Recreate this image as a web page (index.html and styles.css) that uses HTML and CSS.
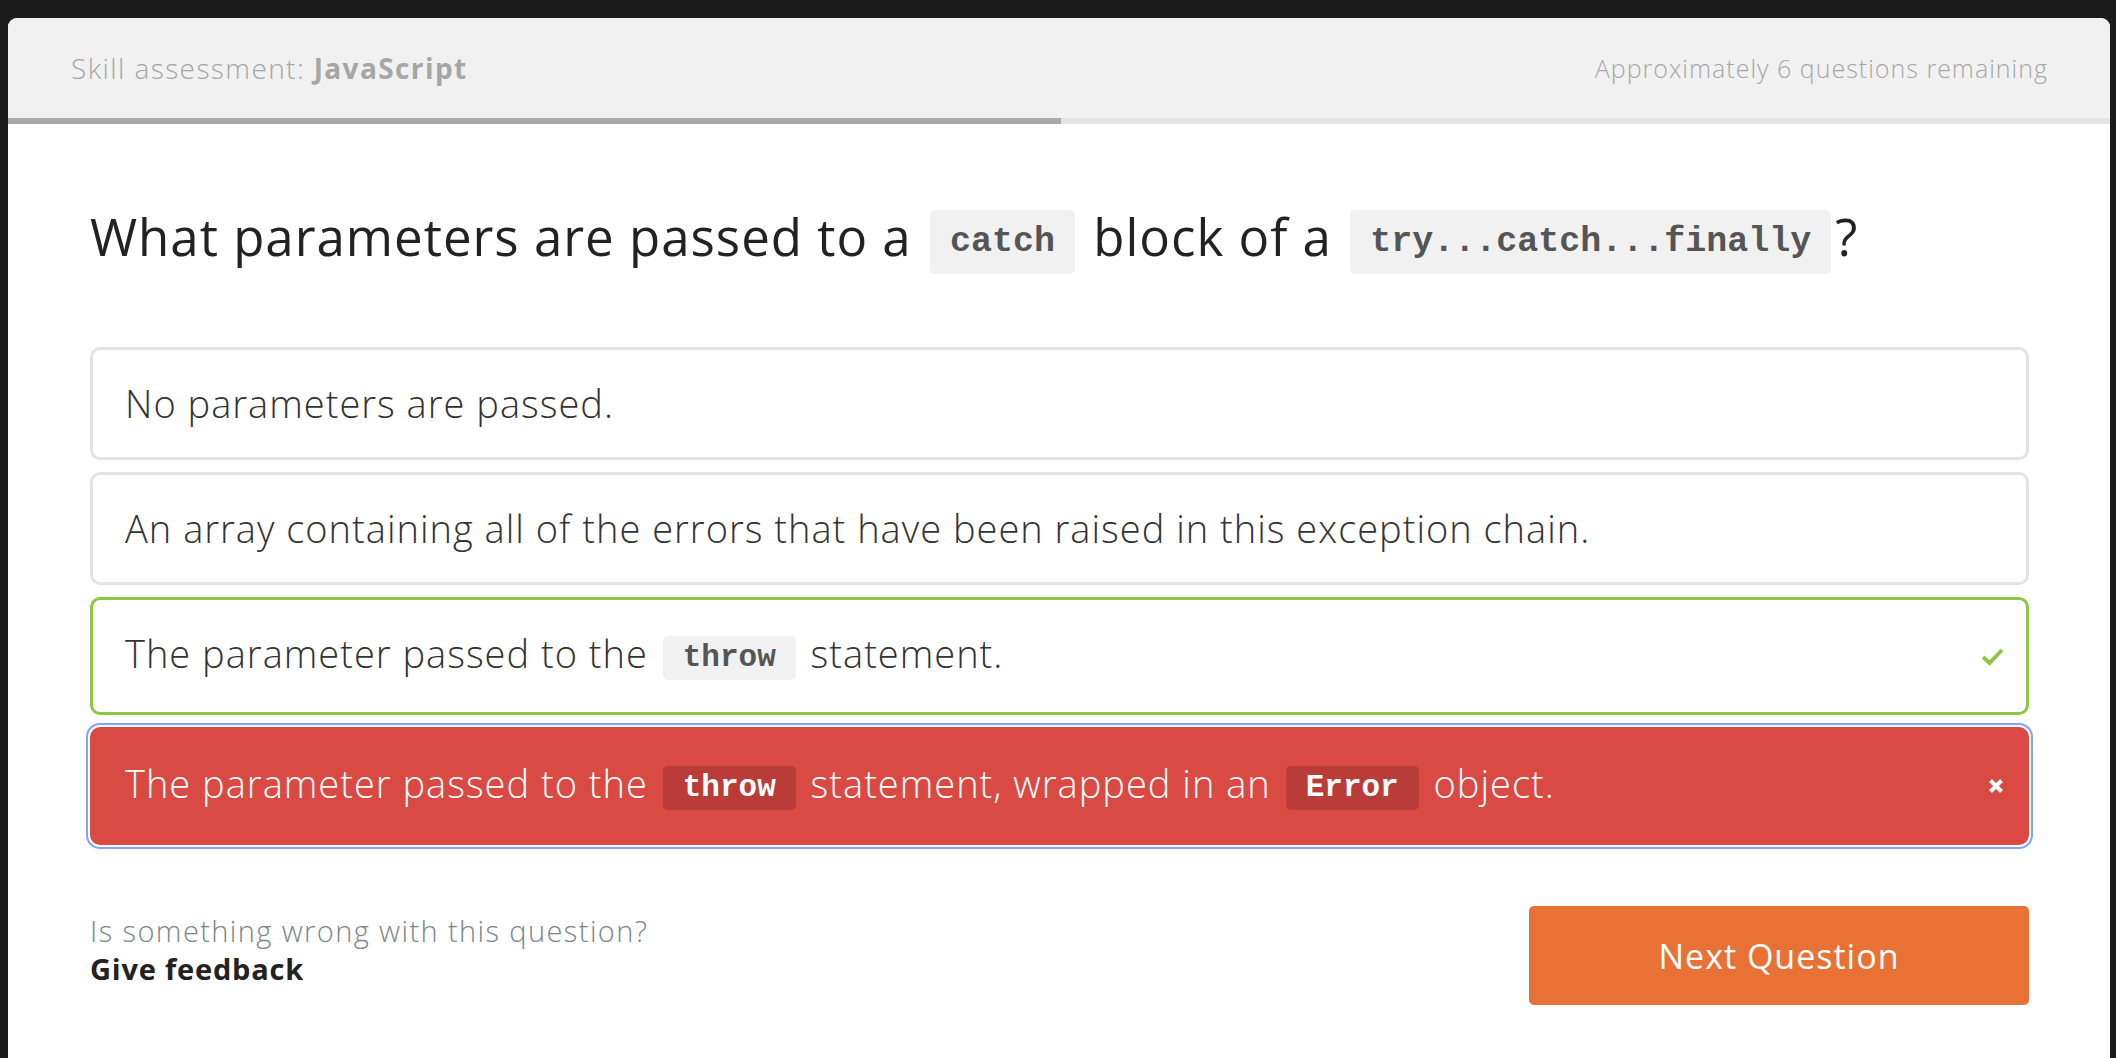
FILE: index.html
```html
<!DOCTYPE html>
<html lang="en">
<head>
<meta charset="utf-8">
<title>Skill assessment: JavaScript</title>
<link rel="stylesheet" href="styles.css">
</head>
<body>
<div class="card">
  <header class="top">
    <div class="title">Skill assessment: <strong>JavaScript</strong></div>
    <div class="remaining">Approximately 6 questions remaining</div>
  </header>
  <div class="progress"><div class="progress-fill" style="width:50.1%"></div></div>
  <main class="content">
    <h1 class="question">What parameters are passed to a <code class="qcode">catch</code> block of a <code class="qcode">try...catch...finally</code>?</h1>
    <ul class="options">
      <li class="option">No parameters are passed.</li>
      <li class="option">An array containing all of the errors that have been raised in this exception chain.</li>
      <li class="option correct"><span>The parameter passed to the <code class="ocode">throw</code> statement.</span>
        <svg class="icon" width="23" height="19" viewBox="0 0 23 19"><path d="M2 10 L8.5 16 L21 3" fill="none" stroke="#8dc63f" stroke-width="3.8"/></svg>
      </li>
      <li class="option wrong"><span>The parameter passed to the <code class="ocode">throw</code> statement, wrapped in an <code class="ocode">Error</code> object.</span>
        <svg class="icon" width="16" height="16" viewBox="0 0 16 16"><path d="M2.5 2.5 L13.5 13.5 M13.5 2.5 L2.5 13.5" fill="none" stroke="#ffffff" stroke-width="4"/></svg>
      </li>
    </ul>
    <div class="footer">
      <div class="feedback">
        <div class="fb-q">Is something wrong with this question?</div>
        <div class="fb-link">Give feedback</div>
      </div>
      <button class="next">Next Question</button>
    </div>
  </main>
</div>
</body>
</html>
```
FILE: styles.css
```css
html, body {
  margin: 0;
  padding: 0;
  background: #1b1b1b;
  height: 100%;
  overflow: hidden;
}
body {
  font-family: "Open Sans", "Lato", sans-serif;
  padding: 18px 6px 0 8px;
  box-sizing: border-box;
}
.card {
  background: #ffffff;
  border-radius: 9px 9px 0 0;
  height: 100%;
  overflow: hidden;
}
.top {
  height: 100px;
  background: #f1f1f1;
  display: flex;
  align-items: center;
  justify-content: space-between;
  padding: 0 62px 0 63px;
  color: #a6a6a6;
  font-weight: 300;
}
.title {
  font-size: 28px;
  letter-spacing: 1.4px;
}
.remaining {
  font-size: 25px;
  letter-spacing: 1px;
}
.top strong {
  font-weight: 700;
}
.progress {
  height: 6px;
  background: #e4e4e4;
}
.progress-fill {
  height: 100%;
  background: #a9a9a9;
}
.content {
  padding: 0 81px 0 82px;
}
.question {
  margin: 79px 0 73px;
  font-size: 51px;
  line-height: 66px;
  font-weight: 400;
  letter-spacing: 1px;
  color: #222222;
}
code {
  font-family: "Liberation Mono", "Courier New", monospace;
  font-weight: 700;
  border-radius: 5px;
  letter-spacing: 0;
}
.qcode {
  display: inline-block;
  font-size: 35px;
  line-height: 40px;
  padding: 12px 20px;
  background: #f1f1f1;
  color: #555555;
  vertical-align: middle;
  margin: 0 4px;
}
.options {
  list-style: none;
  margin: 0;
  padding: 0;
}
.option {
  display: flex;
  align-items: center;
  justify-content: space-between;
  border: 3px solid #e3e3e3;
  border-radius: 10px;
  padding: 32px 22px 32px 32px;
  margin-bottom: 12px;
  font-size: 38px;
  line-height: 43px;
  letter-spacing: 1px;
  color: #333333;
  font-weight: 300;
}
.ocode {
  display: inline-block;
  font-size: 31px;
  line-height: 36px;
  padding: 4px 20px;
  background: #f1f1f1;
  color: #555555;
  vertical-align: middle;
  margin: 0 4px;
}
.correct {
  border-color: #8dc63f;
}
.wrong {
  background: #d94a44;
  border-color: #d94a44;
  color: #ffffff;
  outline: 2px solid #7ea6f4;
  outline-offset: 2px;
}
.wrong .ocode {
  background: #b93c38;
  color: #ffffff;
}
.icon {
  flex: none;
}
.footer {
  display: flex;
  justify-content: space-between;
  align-items: flex-start;
  margin-top: 61px;
}
.feedback {
  padding-top: 6px;
  font-size: 29px;
  line-height: 38px;
}
.fb-q {
  color: #7b858a;
  font-weight: 300;
  letter-spacing: 1.4px;
}
.fb-link {
  color: #222222;
  font-weight: 700;
  letter-spacing: 0.8px;
}
.next {
  width: 500px;
  height: 99px;
  border: none;
  border-radius: 5px;
  background: #e87136;
  color: #ffffff;
  font-family: "Open Sans", "Lato", sans-serif;
  font-size: 34px;
  letter-spacing: 1px;
  font-weight: 400;
}
```
